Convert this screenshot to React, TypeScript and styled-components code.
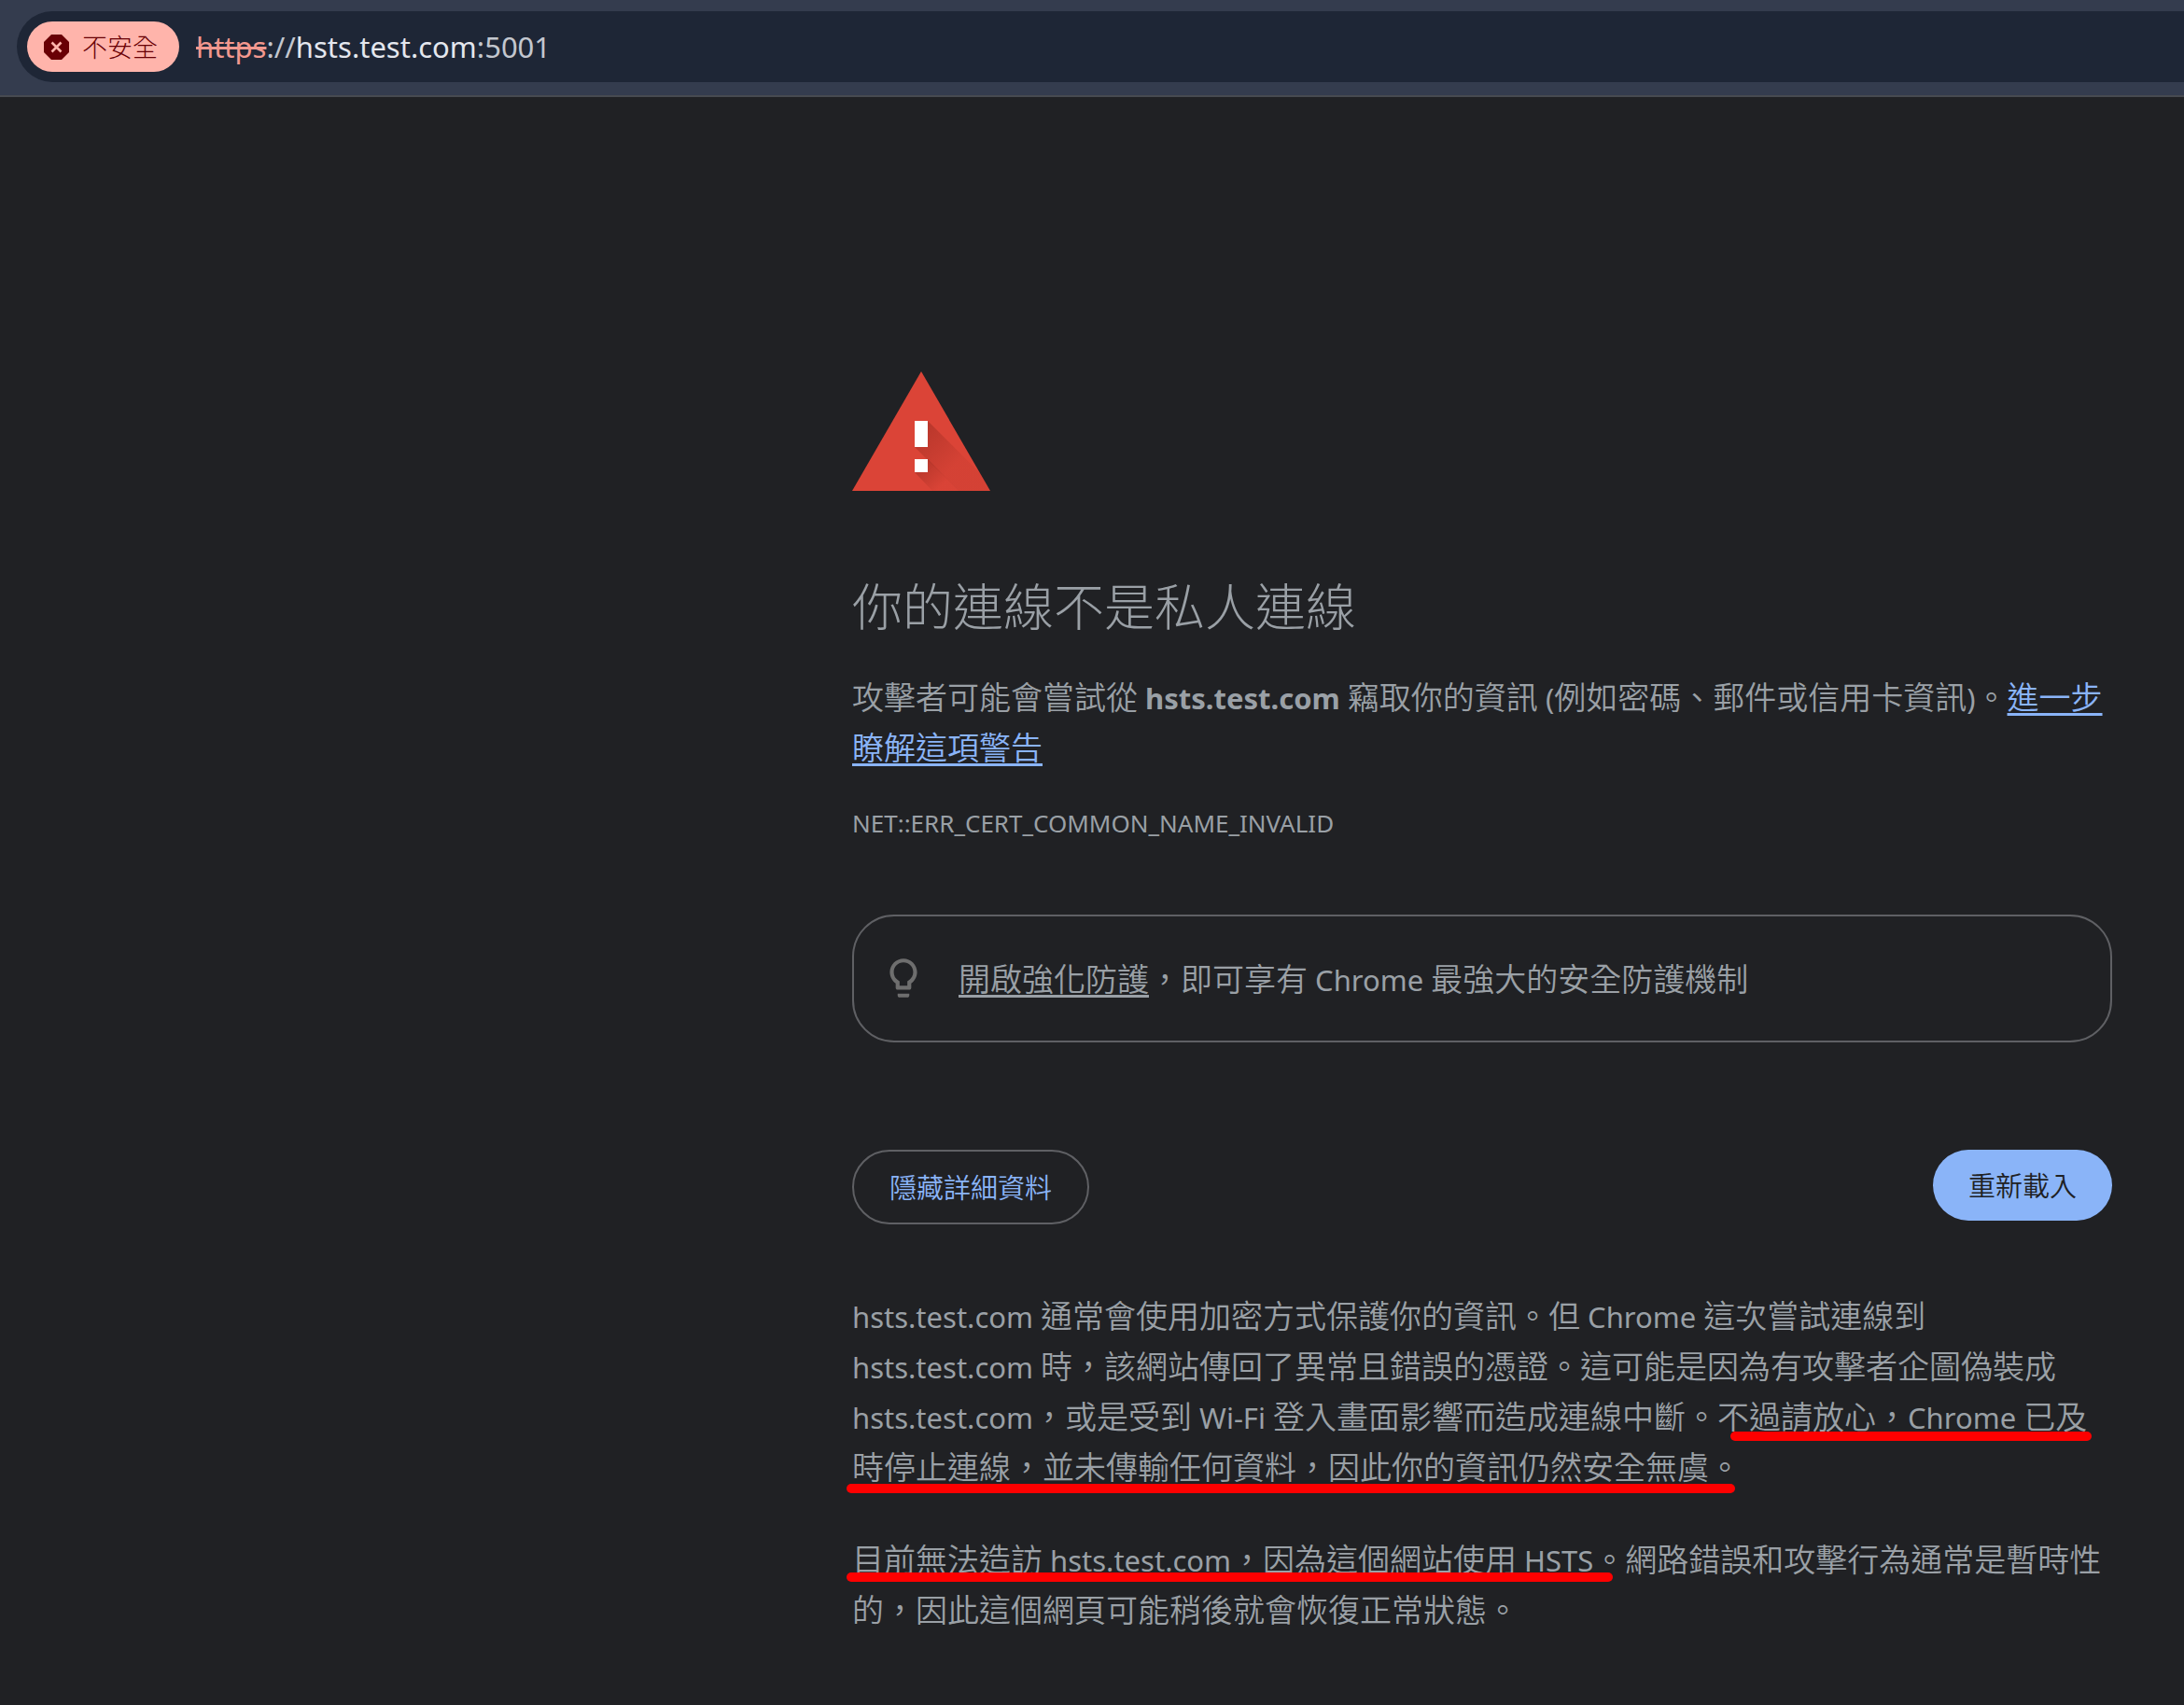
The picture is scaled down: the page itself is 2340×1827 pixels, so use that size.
import React from "react";
import styled, { createGlobalStyle } from "styled-components";

const GlobalStyle = createGlobalStyle`
  * { box-sizing: border-box; }
  body {
    margin: 0;
    background: #202124;
    color: #9aa0a6;
    font-family: "Noto Sans CJK TC", "Noto Sans", sans-serif;
    font-weight: 350;
    text-spacing-trim: space-all;
  }
`;

const Latin = styled.span`
  font-family: "Noto Sans", "Noto Sans CJK TC", sans-serif;
  font-size: 31px;
  font-weight: 400;
  line-height: 1;
`;

const Host = styled(Latin).attrs({ as: "strong" })`
  font-weight: 700;
`;

const Toolbar = styled.header`
  padding: 12px 0 14px 18px;
  background: #343c4e;
  border-bottom: 2px solid #474a50;
`;

const AddressBar = styled.div`
  display: flex;
  align-items: center;
  gap: 18px;
  height: 76px;
  padding-left: 11px;
  border-radius: 38px 0 0 38px;
  background: #1e2636;
`;

const SecurityChip = styled.button`
  display: flex;
  align-items: center;
  gap: 14px;
  height: 54px;
  padding: 0 23px 0 18px;
  border: 0;
  border-radius: 27px;
  background: #ffb4ab;
  color: #690005;
  font: inherit;
  font-size: 27px;
  font-weight: 300;
  line-height: 54px;
`;

const Url = styled.div`
  font-family: "Noto Sans", sans-serif;
  font-size: 31px;
  font-weight: 400;
  line-height: 54px;
  color: #c3c7cf;
`;

const Scheme = styled.s`
  color: #f2988f;
  text-decoration-thickness: 3px;
`;

const UrlHost = styled.span`
  color: #e4e7ee;
`;

const Main = styled.main`
  max-width: 1427px;
  margin-left: auto;
  padding: 294px 77px 75px 0;
`;

const WarningIcon = styled.svg`
  display: block;
  width: 148px;
  height: 128px;
`;

const Title = styled.h1`
  margin: 82px 0 0;
  font-size: 54px;
  font-weight: 300;
  line-height: 80px;
`;

const Paragraph = styled.p`
  position: relative;
  margin: 0;
  font-size: 34px;
  line-height: 54px;
`;

const Intro = styled(Paragraph)`
  margin-top: 31px;
`;

const Link = styled.a`
  color: #8ab4f8;
  text-decoration: underline;
  text-decoration-thickness: 3px;
  text-underline-offset: 4px;
  text-decoration-skip-ink: none;
`;

const QuietLink = styled(Link)`
  color: inherit;
`;

const ErrorCode = styled.div`
  margin-top: 37px;
  font-family: "Noto Sans", sans-serif;
  font-size: 26px;
  font-weight: 400;
  line-height: 36px;
`;

const Suggestion = styled.section`
  display: flex;
  align-items: center;
  gap: 33px;
  margin-top: 80px;
  padding: 39px 27px 40px;
  border: 2px solid #5f6064;
  border-radius: 45px;
`;

const Bulb = styled.svg`
  width: 52px;
  height: 50px;
  fill: #6e6e6e;
`;

const Actions = styled.div`
  display: flex;
  justify-content: space-between;
  align-items: flex-start;
  margin-top: 115px;
`;

const Button = styled.button<{ $primary?: boolean }>`
  padding: 17px 38px 19px;
  border: ${(p) => (p.$primary ? "0" : "2px solid #5f6064")};
  border-radius: 40px;
  background: ${(p) => (p.$primary ? "#8ab4f8" : "transparent")};
  color: ${(p) => (p.$primary ? "#202124" : "#8ab4f8")};
  font: inherit;
  font-size: 29px;
  line-height: 40px;
`;

const Details = styled.section`
  display: flex;
  flex-direction: column;
  gap: 45px;
  margin-top: 70px;
`;

const Marker = styled.span<{ $left: number; $top: number; $width: number }>`
  position: absolute;
  left: ${(p) => p.$left}px;
  top: ${(p) => p.$top}px;
  width: ${(p) => p.$width}px;
  height: 10px;
  border-radius: 5px;
  background: #fe0000;
`;

export default function App() {
  return (
    <>
      <GlobalStyle />
      <Toolbar>
        <AddressBar>
          <SecurityChip type="button">
            <svg width="27" height="27" viewBox="0 0 27 27" aria-hidden="true">
              <path d="M8 0h11l8 8v11l-8 8H8l-8-8V8z" fill="#690005" />
              <path d="M8.500 8.500l10 10M18.500 8.500l-10 10" stroke="#ffb4ab" strokeWidth="2.600" />
            </svg>
            不安全
          </SecurityChip>
          <Url>
            <Scheme>https</Scheme>://<UrlHost>hsts.test.com</UrlHost>:5001
          </Url>
        </AddressBar>
      </Toolbar>
      <Main lang="zh-Hant">
        <WarningIcon viewBox="0 0 148 128" aria-hidden="true">
          <defs>
            <linearGradient id="shade" gradientUnits="userSpaceOnUse" x1="74" y1="60" x2="112" y2="98">
              <stop offset="0" stopColor="#7a1f16" stopOpacity="0.36" />
              <stop offset="1" stopColor="#7a1f16" stopOpacity="0.07" />
            </linearGradient>
            <linearGradient id="dotShade" gradientUnits="userSpaceOnUse" x1="74" y1="100" x2="96" y2="122">
              <stop offset="0" stopColor="#7a1f16" stopOpacity="0.36" />
              <stop offset="1" stopColor="#7a1f16" stopOpacity="0.02" />
            </linearGradient>
            <clipPath id="triangle">
              <path d="M74 0l74 128H0z" />
            </clipPath>
          </defs>
          <path d="M74 0l74 128H0z" fill="#db4437" />
          <g clipPath="url(#triangle)">
            <path d="M81 53l75 75H114L67 81z" fill="url(#shade)" />
            <path d="M81 94l34 34H86L67 108z" fill="url(#dotShade)" />
          </g>
          <path d="M67 53h14v28H67zM67 94h14v14H67z" fill="#fff" />
        </WarningIcon>
        <Title>你的連線不是私人連線</Title>
        <Intro>
          攻擊者可能會嘗試從<Host> hsts.test.com </Host>竊取你的資訊<Latin> (</Latin>例如密碼、郵件或信用卡資訊<Latin>)</Latin>。<Link href="#learn-more">進一步瞭解這項警告</Link>
        </Intro>
        <ErrorCode>NET::ERR_CERT_COMMON_NAME_INVALID</ErrorCode>
        <Suggestion>
          <Bulb viewBox="0 0 24 24" aria-hidden="true">
            <path d="M9 21c0 .55.45 1 1 1h4c.55 0 1-.45 1-1v-1H9v1zm3-19C8.140 2 5 5.140 5 9c0 2.380 1.190 4.470 3 5.740V17c0 .55.45 1 1 1h6c.55 0 1-.45 1-1v-2.260c1.810-1.270 3-3.360 3-5.740 0-3.860-3.140-7-7-7zm2.850 11.100l-.85.6V16h-4v-2.300l-.85-.6A4.997 4.997 0 0 1 7 9c0-2.760 2.240-5 5-5s5 2.240 5 5c0 1.630-.8 3.160-2.150 4.100z" />
          </Bulb>
          <Paragraph>
            <QuietLink href="#protection">開啟強化防護</QuietLink>，即可享有<Latin> Chrome </Latin>最強大的安全防護機制
          </Paragraph>
        </Suggestion>
        <Actions>
          <Button type="button">隱藏詳細資料</Button>
          <Button type="button" $primary>重新載入</Button>
        </Actions>
        <Details>
          <Paragraph>
            <Latin>hsts.test.com </Latin>通常會使用加密方式保護你的資訊。但<Latin> Chrome </Latin>這次嘗試連線到<Latin> hsts.test.com </Latin>時，該網站傳回了異常且錯誤的憑證。這可能是因為有攻擊者企圖偽裝成<Latin> hsts.test.com</Latin>，或是受到<Latin> Wi-Fi </Latin>登入畫面影響而造成連線中斷。不過請放心，<Latin>Chrome </Latin>已及時停止連線，並未傳輸任何資料，因此你的資訊仍然安全無虞。
            <Marker $left={941} $top={152} $width={387} />
            <Marker $left={-6} $top={208} $width={952} />
          </Paragraph>
          <Paragraph>
            目前無法造訪<Latin> hsts.test.com</Latin>，因為這個網站使用<Latin> HSTS</Latin>。網路錯誤和攻擊行為通常是暫時性的，因此這個網頁可能稍後就會恢復正常狀態。
            <Marker $left={-6} $top={42} $width={821} />
          </Paragraph>
        </Details>
      </Main>
    </>
  );
}
